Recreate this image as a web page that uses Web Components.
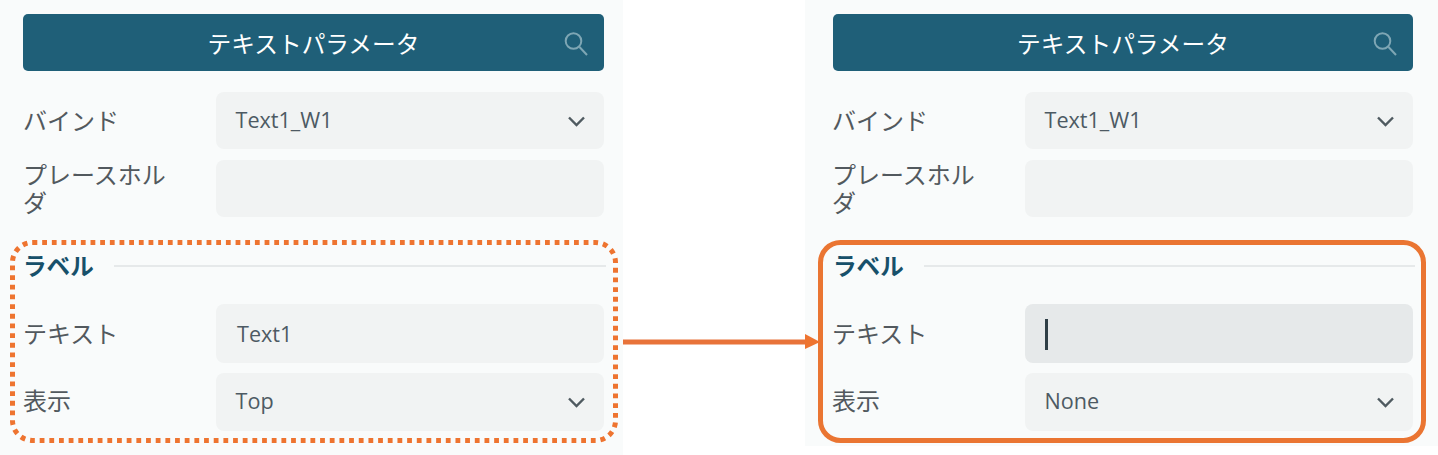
<!DOCTYPE html>
<html lang="ja">
<head>
<meta charset="utf-8">
<title>テキストパラメータ</title>
<style>
	html, body { margin: 0; background: #fff; }
	body { width: 1438px; height: 455px; overflow: hidden; font-family: "Open Sans", "Noto Sans CJK JP", sans-serif; }
	#page { position: relative; display: flex; justify-content: space-between; align-items: flex-start; height: 455px; }
</style>
</head>
<body>
<div id="page">
	<param-panel style="--w:623px; --h:455px; --pl:23px; --pr:19px; --col:193px; --lx:0px">
		<param-row label="バインド"><param-field type="select" value="Text1_W1"></param-field></param-row>
		<param-row label="プレースホルダ"><param-field></param-field></param-row>
		<param-section label="ラベル"></param-section>
		<param-row label="テキスト" tall><param-field value="Text1" tall indent></param-field></param-row>
		<param-row label="表示" last><param-field type="select" value="Top" last></param-field></param-row>
		<param-mark kind="dotted"></param-mark>
	</param-panel>
	<param-panel style="--w:633px; --h:446px; --pl:28px; --pr:25px; --col:192px; --lx:-1px">
		<param-row label="バインド"><param-field type="select" value="Text1_W1"></param-field></param-row>
		<param-row label="プレースホルダ"><param-field></param-field></param-row>
		<param-section label="ラベル"></param-section>
		<param-row label="テキスト" tall><param-field tall focused></param-field></param-row>
		<param-row label="表示" last><param-field type="select" value="None" last></param-field></param-row>
		<param-mark kind="solid"></param-mark>
	</param-panel>
	<flow-arrow></flow-arrow>
</div>
<script>
	class ParamPanel extends HTMLElement {
		constructor() {
			super();
			this.attachShadow({mode: 'open'}).innerHTML = `
				<style>
				:host {
					display: block;
					box-sizing: border-box;
					position: relative;
					width: var(--w);
					height: var(--h);
					padding: 14px var(--pr) 0 var(--pl);
					background: #f9fbfb;
				}
				header {
					position: relative;
					display: flex;
					align-items: center;
					justify-content: center;
					height: 57px;
					margin-bottom: 21px;
					border-radius: 5px;
					background: #1f5f78;
					color: #fff;
					font-size: 23.7px;
				}
				svg { position: absolute; right: 15px; top: 16px; }
				</style>
				<header>テキストパラメータ
					<svg width="25" height="26" viewBox="0 0 25 26" fill="none" stroke="#7ea6b4" stroke-width="2">
						<circle cx="9.5" cy="11" r="7.8"/>
						<path d="M15.5 17l7.5 8"/>
					</svg>
				</header>
				<slot></slot>
			`;
		}
	}

	class ParamRow extends HTMLElement {
		static observedAttributes = ['label'];

		constructor() {
			super();
			this.attachShadow({mode: 'open'}).innerHTML = `
				<style>
				:host {
					display: grid;
					grid-template-columns: var(--col) 1fr;
					align-items: center;
					min-height: 57px;
					margin-bottom: 11px;
				}
				:host([tall]) { margin-bottom: 10px; }
				#label {
					width: 150px;
					margin-left: var(--lx);
					color: #52595e;
					font-size: 24px;
					line-height: 27.5px;
				}
				:host([last]) #label { margin-bottom: 3px; }
				</style>
				<div id="label"></div>
				<slot></slot>
			`;
		}

		attributeChangedCallback(attr, oldval, newval) {
			this.shadowRoot.querySelector('#label').textContent = newval;
		}
	}

	class ParamField extends HTMLElement {
		constructor() {
			super();
			this.attachShadow({mode: 'open'}).innerHTML = `
				<style>
				:host {
					display: flex;
					align-items: center;
					justify-content: space-between;
					box-sizing: border-box;
					height: 57px;
					padding: 0 19px 2px 19.5px;
					border-radius: 8px;
					background: #f1f3f3;
					color: #4d5a63;
					font-size: 21.6px;
				}
				:host([tall]) { height: 59px; padding-bottom: 0; }
				:host([last]) { height: 58px; padding-bottom: 3px; }
				:host([indent]) { padding-left: 21px; }
				:host([focused]) { background: #e6e9ea; }
				#caret { width: 3px; height: 31px; margin-top: 1px; background: #2f3f47; }
				svg { margin-top: 4px; }
				</style>
				<span id="value"></span>
			`;
		}

		connectedCallback() {
			this.shadowRoot.querySelector('#value').textContent = this.getAttribute('value') || '';
			if (this.hasAttribute('focused')) {
				this.shadowRoot.querySelector('#value').id = 'caret';
			}
			if (this.getAttribute('type') === 'select') {
				this.shadowRoot.append(document.createRange().createContextualFragment(`
					<svg width="17" height="11" viewBox="0 0 17 11" fill="none" stroke="#4f5a60" stroke-width="2.4">
						<path d="M1 1.5l7.5 7.5 7.5-7.5"/>
					</svg>
				`));
			}
		}
	}

	class ParamSection extends HTMLElement {
		constructor() {
			super();
			this.attachShadow({mode: 'open'}).innerHTML = `
				<style>
				:host {
					display: flex;
					align-items: center;
					gap: 20px;
					height: 32px;
					margin: 33px -2px 22px 0;
					color: #17506a;
					font-size: 23.6px;
					font-weight: 700;
				}
				span { position: relative; top: -1px; }
				i { flex: 1; height: 1.5px; background: #e6e9ea; }
				</style>
				<span></span><i></i>
			`;
		}

		connectedCallback() {
			this.shadowRoot.querySelector('span').textContent = this.getAttribute('label');
		}
	}

	// annotation frame lying over the section
	class ParamMark extends HTMLElement {
		connectedCallback() {
			const dotted = this.getAttribute('kind') === 'dotted';
			const root = this.attachShadow({mode: 'open'});
			root.innerHTML = `
				<style>
				:host { position: absolute; left: ${dotted ? 10 : 12.5}px; top: 240px; display: block; }
				svg { display: block; }
				</style>
				<svg width="608" height="203" fill="none" stroke="${dotted ? '#ee7430' : '#ea7532'}" stroke-width="5">
					<rect x="2.5" y="2.5" width="603" height="198" rx="20" ${dotted ? 'stroke-dasharray="4.8 4.87"' : ''}/>
				</svg>
			`;
		}
	}

	class FlowArrow extends HTMLElement {
		constructor() {
			super();
			this.attachShadow({mode: 'open'}).innerHTML = `
				<style>
				:host { position: absolute; left: 623px; top: 334px; display: block; }
				svg { display: block; }
				</style>
				<svg width="197" height="15">
					<path d="M0 5.5h182v5H0z" fill="#e8733a"/>
					<path d="M182 0l15 8-15 7z" fill="#ee7430"/>
				</svg>
			`;
		}
	}

	customElements.define('param-panel', ParamPanel);
	customElements.define('param-row', ParamRow);
	customElements.define('param-field', ParamField);
	customElements.define('param-section', ParamSection);
	customElements.define('param-mark', ParamMark);
	customElements.define('flow-arrow', FlowArrow);
</script>
</body>
</html>
